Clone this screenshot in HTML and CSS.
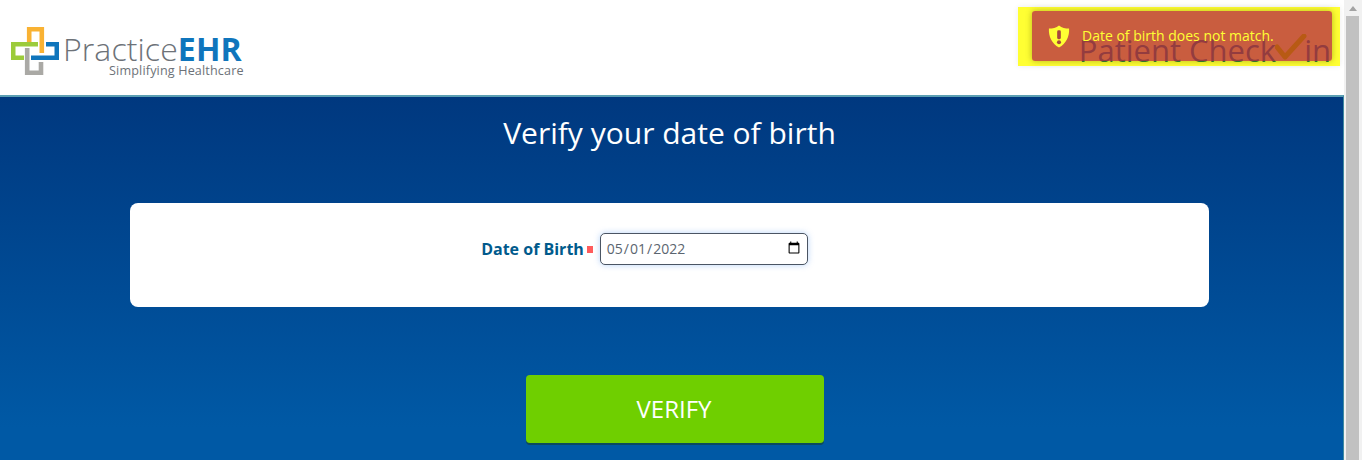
FILE: index.html
```html
<!DOCTYPE html>
<html lang="en">
<head>
<meta charset="utf-8">
<title>Patient Check in</title>
<link rel="stylesheet" href="styles.css">
</head>
<body>
<div class="window">
  <div class="page">
    <header class="header">
      <div class="logo">
        <svg class="logo-mark" width="48" height="48" viewBox="11 27 48 48" fill="none" stroke-width="4.6">
          <path d="M29.2 42V29.2H41.8V53" stroke="#f9b233"/>
          <path d="M27.2 48V72.8H41V62" stroke="#aaa9a5"/>
          <path d="M38 44.2H13.2V57.8H24" stroke="#9ccb3b"/>
          <path d="M46 44.2H56.8V57.8H31" stroke="#0f75bc"/>
        </svg>
        <div class="logo-text">
          <div class="logo-name"><span class="logo-practice">Practice</span><span class="logo-ehr">EHR</span></div>
          <div class="logo-tag">Simplifying Healthcare</div>
        </div>
      </div>
      <div class="checkin">
        <span class="checkin-title">Patient Check</span>
        <svg class="checkin-tick" width="34" height="28" viewBox="0 0 34 28" fill="none"><path d="M2 13L10 23L29 2" stroke="#b85a14" stroke-width="5" stroke-linecap="round" stroke-linejoin="round"/></svg>
        <span class="checkin-title">in</span>
      </div>
      <div class="toast-wrap">
        <div class="toast">
          <svg class="toast-icon" width="22" height="23" viewBox="0 0 24 26" preserveAspectRatio="none">
            <path d="M12 0.5C15 3 19 4 23 4C23.5 13 20 21 12 25.5C4 21 0.5 13 1 4C5 4 9 3 12 0.5Z" fill="#ffff33"/>
            <rect x="10" y="6" width="4" height="10" rx="1.5" fill="#a8473f"/>
            <circle cx="12" cy="19.5" r="2.2" fill="#a8473f"/>
          </svg>
          <span class="toast-text">Date of birth does not match.</span>
        </div>
      </div>
    </header>
    <main class="main">
      <h1 class="title">Verify your date of birth</h1>
      <section class="card">
        <label class="dob-label" for="dob">Date of Birth</label>
        <span class="required"></span>
        <input class="dob-input" id="dob" type="date" value="2022-05-01">
      </section>
      <button class="verify" type="button">VERIFY</button>
    </main>
  </div>
  <div class="scrollbar">
    <div class="scroll-btn"><span class="scroll-arrow"></span></div>
    <div class="scroll-thumb"></div>
  </div>
</div>
</body>
</html>
```
FILE: styles.css
```css
* { box-sizing: border-box; }
html, body { margin: 0; height: 100%; overflow: hidden; }
body { font-family: "Open Sans", "Liberation Sans", sans-serif; background: #fff; }
.window { display: flex; height: 460px; }
.page { width: 1344px; flex: none; display: flex; flex-direction: column; }
.scrollbar { width: 18px; flex: none; background: #f1f1f1; display: flex; flex-direction: column; }
.scroll-btn { height: 16px; display: flex; align-items: center; justify-content: center; }
.scroll-arrow { width: 0; height: 0; border-left: 4px solid transparent; border-right: 4px solid transparent; border-bottom: 5px solid #a3a3a3; }
.scroll-thumb { flex: 1; background: #c1c1c1; margin: 0 3px 0 2px; }

.header { height: 95px; flex: none; position: relative; display: flex; align-items: flex-start; justify-content: space-between; padding: 27px 13px 0 11px; background: #fff; }
.logo { display: flex; align-items: flex-start; }
.logo-mark { margin-right: 4px; }
.logo-text { display: flex; flex-direction: column; padding-top: 4px; }
.logo-name { font-size: 32px; line-height: 36px; letter-spacing: 0.1px; }
.logo-practice { font-weight: 300; color: #6d7278; }
.logo-ehr { font-weight: 700; color: #0f75bc; }
.logo-tag { font-size: 12.6px; line-height: 14px; color: #6d7278; text-align: right; margin-top: -3px; margin-right: -2px; letter-spacing: 0.15px; }
.checkin { display: flex; align-items: flex-start; color: rgb(40, 125, 50); }
.checkin-title { position: relative; z-index: 1; font-size: 31px; line-height: 46px; font-weight: 500; }
.checkin-tick { position: relative; z-index: 3; flex: none; margin: 7px -5px 0 -1px; }

.toast-wrap { position: absolute; left: 1018px; top: 7px; width: 322px; height: 59px; padding: 4px 8px 5px 14px; background: #ffff33; box-shadow: 0 0 6px rgba(0, 0, 0, 0.08); }
.toast { position: relative; z-index: 2; height: 100%; display: flex; align-items: center; gap: 12px; padding: 0 16px; background: rgba(183, 39, 68, 0.75); border-radius: 3px; box-shadow: 0 0 6px rgba(90, 90, 0, 0.45); }
.toast-icon { flex: none; }
.toast-text { font-size: 14px; line-height: 18px; color: #ffff33; }

.main { flex: 1; min-height: 0; display: flex; flex-direction: column; align-items: center; background: linear-gradient(180deg, #00387f 0, #0059a5 330px); border-top: 2px solid #5b9fb3; border-right: 1px solid #3f8a9f; }
.title { margin: 16px 0 0; width: 100%; padding-right: 4px; text-align: center; color: #fff; font-size: 30px; line-height: 40px; font-weight: 400; }
.card { margin: 50px 0 0 -4px; width: 1079px; height: 104px; flex: none; background: #fff; border-radius: 8px; display: flex; justify-content: center; align-items: flex-start; padding: 30px 50px 0 0; }
.dob-label { font-size: 16px; line-height: 32px; font-weight: 700; color: #005a8c; }
.required { width: 6px; height: 7px; background: #ff5c5c; margin: 13px 7px 0 3px; }
.dob-input { width: 208px; height: 32px; padding: 0 4px 2px 5px; border: 1px solid #4b5563; border-radius: 5px; font-family: "Open Sans", sans-serif; font-size: 14px; color: #5b6570; box-shadow: 0 0 6px rgba(80, 150, 240, 0.4); background: #fff; }
.verify { margin: 68px 0 0 7px; width: 298px; height: 68px; padding: 0 2px 2px 0; flex: none; border: 0; border-radius: 4px; background: #6fcf00; box-shadow: 0 2px 0 #0c4a5e; color: #fff; font-family: "Open Sans", sans-serif; font-size: 24px; }
```
